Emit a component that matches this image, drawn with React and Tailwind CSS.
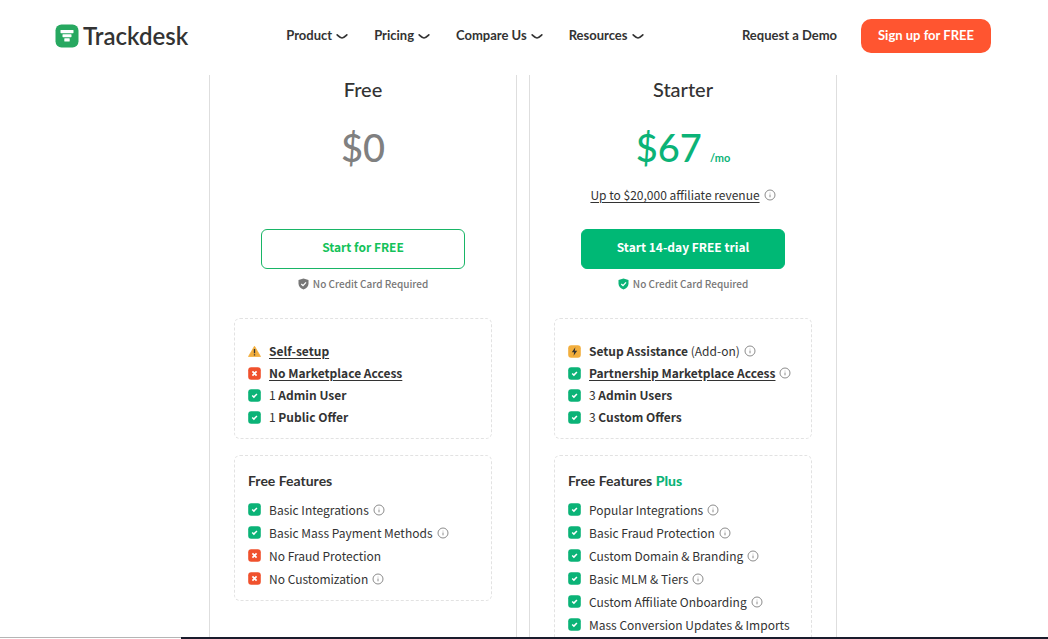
import React from 'react';

const ChevronIcon = () => (
  <svg width="12" height="12" viewBox="0 0 12 12" fill="none" stroke="#333" strokeWidth="1.7" strokeLinecap="round" strokeLinejoin="round" aria-hidden="true">
    <path d="M1.2 4.8C2.800 6.300 4.400 8 6 8s3.200-1.700 4.800-3.200" />
  </svg>
);

const LogoMark = () => (
  <svg width="24" height="24" viewBox="0 0 24 24" aria-hidden="true">
    <rect x="0.500" y="0.500" width="23" height="23" rx="6" fill="#27a860" />
    <g fill="#fff">
      <rect x="5.500" y="6" width="13" height="3.200" rx="0.600" />
      <rect x="7.500" y="10.200" width="9" height="3" rx="0.600" />
      <rect x="9.300" y="14.200" width="5.400" height="3.400" rx="0.600" />
    </g>
  </svg>
);

const InfoIcon = () => (
  <svg className="shrink-0" width="12" height="12" viewBox="0 0 12 12" fill="none" stroke="#8c8c8c" aria-hidden="true">
    <circle cx="6" cy="6" r="5" />
    <path d="M6 5.500v2.800" />
    <path d="M6 3.700v0.700" strokeWidth="0.800" />
  </svg>
);

const ShieldIcon = ({ color }) => (
  <svg className="relative top-px" width="11" height="12" viewBox="0 0 11 12" aria-hidden="true">
    <path d="M5.500 0.500 10.500 2v3.500c0 3-2 4.900-5 6-3-1.100-5-3-5-6V2z" fill={color} />
    <path d="m3.300 6 1.700 1.600 3-3.200" fill="none" stroke="#fff" strokeWidth="1.300" />
  </svg>
);

const StatusIcon = ({ type }) => {
  if (type === 'warn') {
    return (
      <svg width="13" height="13" viewBox="0 0 13 13" aria-hidden="true">
        <path d="M6.500 1.200 12.500 11.500H0.500z" fill="#f2ae3d" stroke="#f2ae3d" strokeWidth="0.800" strokeLinejoin="round" />
        <path d="M6.500 4v4.200M6.500 9.200v1.300" stroke="#333" strokeWidth="1.300" />
      </svg>
    );
  }
  const fill = { yes: '#0bb377', no: '#f0512d', bolt: '#f2ae3d' }[type];
  return (
    <svg width="13" height="13" viewBox="0 0 13 13" aria-hidden="true">
      <rect x="0.200" y="0.200" width="12.600" height="12.600" rx="3" fill={fill} />
      {type === 'yes' && <path d="m4.200 6.500 1.700 1.600 3-3.200" fill="none" stroke="#fff" strokeWidth="1.500" />}
      {type === 'no' && <path d="m4.400 4.400 4.200 4.200M8.600 4.400 4.400 8.600" stroke="#fff" strokeWidth="1.700" />}
      {type === 'bolt' && <path d="M7.300 2.300 3.800 7.200h2.300l-0.500 3.600 3.600-5H6.800z" fill="#333" />}
    </svg>
  );
};

const navItems = ['Product', 'Pricing', 'Compare Us', 'Resources'];

const plans = [
  {
    name: 'Free',
    price: '$0',
    cta: 'Start for FREE',
    access: [
      { icon: 'warn', bold: 'Self-setup', underline: true },
      { icon: 'no', bold: 'No Marketplace Access', underline: true },
      { icon: 'yes', before: '1 ', bold: 'Admin User' },
      { icon: 'yes', before: '1 ', bold: 'Public Offer' },
    ],
    features: [
      { icon: 'yes', before: 'Basic Integrations', info: true },
      { icon: 'yes', before: 'Basic Mass Payment Methods', info: true },
      { icon: 'no', before: 'No Fraud Protection' },
      { icon: 'no', before: 'No Customization', info: true },
    ],
  },
  {
    name: 'Starter',
    price: '$67',
    period: '/mo',
    revenue: 'Up to $20,000 affiliate revenue',
    cta: 'Start 14-day FREE trial',
    paid: true,
    access: [
      { icon: 'bolt', bold: 'Setup Assistance', after: ' (Add-on)', info: true },
      { icon: 'yes', bold: 'Partnership Marketplace Access', underline: true, info: true },
      { icon: 'yes', before: '3 ', bold: 'Admin Users' },
      { icon: 'yes', before: '3 ', bold: 'Custom Offers' },
    ],
    features: [
      { icon: 'yes', before: 'Popular Integrations', info: true },
      { icon: 'yes', before: 'Basic Fraud Protection', info: true },
      { icon: 'yes', before: 'Custom Domain & Branding', info: true },
      { icon: 'yes', before: 'Basic MLM & Tiers', info: true },
      { icon: 'yes', before: 'Custom Affiliate Onboarding', info: true },
      { icon: 'yes', before: 'Mass Conversion Updates & Imports' },
    ],
  },
];

const FeatureRow = ({ item }) => (
  <li className="flex items-center whitespace-nowrap">
    <StatusIcon type={item.icon} />
    <span className="ml-2 mr-1">
      {item.before}
      {item.bold && (
        <b className={item.underline ? 'font-bold underline underline-offset-2' : 'font-bold'}>{item.bold}</b>
      )}
      {item.after}
    </span>
    {item.info && <InfoIcon />}
  </li>
);

const PlanCard = ({ plan }) => (
  <section className="w-[308px] border-x border-[#dedede] px-6">
    <h2 className="pt-0.5 text-center font-['Lato'] text-xl leading-6 font-medium">{plan.name}</h2>

    {/* Price */}
    <div className={`mt-[22px] flex h-12 items-baseline justify-center gap-2 font-['Lato'] font-medium ${plan.paid ? 'text-[#0bb377]' : 'text-[#808080]'}`}>
      <span className="text-[38px] leading-12">{plan.price}</span>
      {plan.period && <span className="text-[11px] font-bold">{plan.period}</span>}
    </div>
    <div className="mt-3 flex h-6 items-center justify-center gap-1 text-xs">
      {plan.revenue && (
        <>
          <a href="#revenue" className="underline underline-offset-2">{plan.revenue}</a>
          <InfoIcon />
        </>
      )}
    </div>

    {/* Call to action */}
    <div className="mt-[22px] flex justify-center">
      <button
        type="button"
        className={`h-10 w-[204px] rounded-md border pb-1 text-xs font-bold ${
          plan.paid ? 'border-[#00b875] bg-[#00b875] text-white' : 'border-[#18b566] bg-white text-[#14c25a]'
        }`}
      >
        {plan.cta}
      </button>
    </div>
    <p className="mt-1.5 flex h-4 items-center justify-center gap-1 text-[10px] font-medium text-[#777]">
      <ShieldIcon color={plan.paid ? '#0bb377' : '#777'} />
      No Credit Card Required
    </p>

    <ul className="mt-[27px] rounded-md border border-dashed border-[#e2e2e2] px-[13px] pt-[21px] pb-[10px] text-xs leading-[22px]">
      {plan.access.map((item) => (
        <FeatureRow key={item.bold} item={item} />
      ))}
    </ul>

    <div className="mt-4 rounded-md border border-dashed border-[#e2e2e2] px-[13px] pt-[13px] pb-[10px]">
      <h3 className="font-['Lato'] text-sm leading-6 font-bold">
        Free Features {plan.paid && <span className="font-black text-[#0bb377]">Plus</span>}
      </h3>
      <ul className="mt-[5px] text-xs leading-[23px]">
        {plan.features.map((item) => (
          <FeatureRow key={item.before} item={item} />
        ))}
      </ul>
    </div>
  </section>
);

export default function App() {
  return (
    <div className="flex h-screen flex-col overflow-hidden bg-white font-['Noto_Sans_CJK_SC',sans-serif] text-[#333]">
      <header className="shrink-0 pr-0.5 pt-[19px] pb-[22px] font-['Lato',sans-serif]">
        <div className="mx-auto flex max-w-[936px] items-center">
          <a href="#home" className="flex items-center gap-1 text-2xl leading-8 font-semibold">
            <LogoMark />
            Trackdesk
          </a>
          <nav className="ml-[98px] flex gap-[26px]">
            {navItems.map((item) => (
              <button key={item} type="button" className="flex items-center gap-1 text-[13px] font-bold">
                {item}
                <ChevronIcon />
              </button>
            ))}
          </nav>
          <a href="#demo" className="ml-auto text-[13px] font-bold">Request a Demo</a>
          <a href="#signup" className="ml-6 flex h-[34px] w-[130px] items-center justify-center rounded-[10px] bg-[#ff5530] text-[13px] font-bold text-white">
            Sign up for FREE
          </a>
        </div>
      </header>

      <main className="flex min-h-0 flex-1 justify-center gap-3 overflow-hidden pr-0.5">
        {plans.map((plan) => (
          <PlanCard key={plan.name} plan={plan} />
        ))}
      </main>

      <footer className="flex h-0.5 shrink-0">
        <div className="w-[181px] border-t border-[#b5b5b5]" />
        <div className="flex-1 bg-[#1a1c2c]" />
      </footer>
    </div>
  );
}
